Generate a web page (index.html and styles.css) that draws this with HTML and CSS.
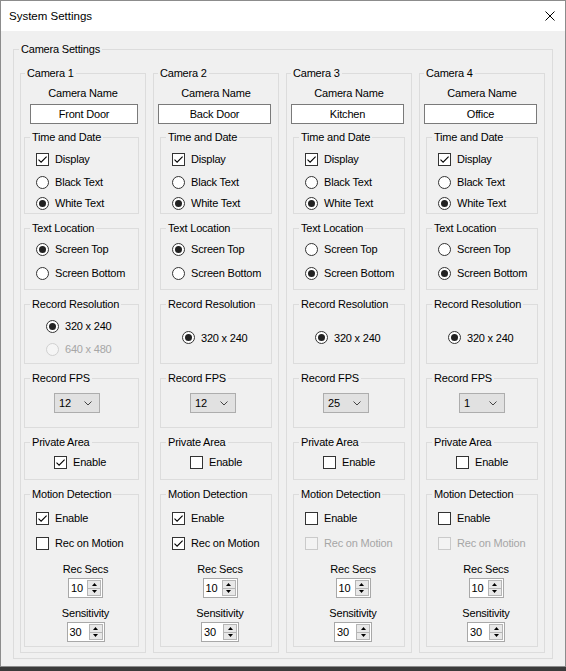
FILE: index.html
```html
<!DOCTYPE html>
<html>
<head>
<meta charset="utf-8">
<link rel="stylesheet" href="styles.css">
</head>
<body>
<div class="window">
  <div class="titlebar">
    <span class="title">System Settings</span>
    <svg class="close" width="10" height="10" viewBox="0 0 10 10"><path d="M0.5 0.5 L9.5 9.5 M9.5 0.5 L0.5 9.5" stroke="#000" stroke-width="1" fill="none"/></svg>
  </div>
  <div class="content">
    <fieldset class="settings">
      <legend>Camera Settings</legend>
      <div class="cams">

        <!-- Camera 1 -->
        <fieldset class="cam cam-first">
          <legend>Camera 1</legend>
          <div class="name-label">Camera Name</div>
          <div class="textbox">Front Door</div>
          <fieldset class="grp grp-time">
            <legend>Time and Date</legend>
            <div class="gb">
              <div class="row r-display"><span class="chk on"><svg viewBox="0 0 11 11"><path d="M1.5 5.6 L4.1 8.2 L9.6 2.6" stroke="#000" stroke-width="1.1" fill="none"/></svg></span>Display</div>
              <div class="row r-black"><span class="radio"></span>Black Text</div>
              <div class="row r-white"><span class="radio on"></span>White Text</div>
            </div>
          </fieldset>
          <fieldset class="grp grp-loc">
            <legend>Text Location</legend>
            <div class="gb">
              <div class="row r-top"><span class="radio on"></span>Screen Top</div>
              <div class="row r-bottom"><span class="radio"></span>Screen Bottom</div>
            </div>
          </fieldset>
          <fieldset class="grp grp-res">
            <legend>Record Resolution</legend>
            <div class="gb">
              <div class="row"><span class="radio on"></span>320 x 240</div>
              <div class="row disabled"><span class="radio"></span>640 x 480</div>
            </div>
          </fieldset>
          <fieldset class="grp grp-fps">
            <legend>Record FPS</legend>
            <div class="gb">
              <div class="combo"><span>12</span><svg width="8" height="5" viewBox="0 0 8 5"><path d="M0.5 0.5 L4 4 L7.5 0.5" stroke="#444" stroke-width="1" fill="none"/></svg></div>
            </div>
          </fieldset>
          <fieldset class="grp grp-priv">
            <legend>Private Area</legend>
            <div class="gb">
              <div class="row"><span class="chk on"><svg viewBox="0 0 11 11"><path d="M1.5 5.6 L4.1 8.2 L9.6 2.6" stroke="#000" stroke-width="1.1" fill="none"/></svg></span>Enable</div>
            </div>
          </fieldset>
          <fieldset class="grp grp-motion">
            <legend>Motion Detection</legend>
            <div class="gb">
              <div class="row r-enable"><span class="chk on"><svg viewBox="0 0 11 11"><path d="M1.5 5.6 L4.1 8.2 L9.6 2.6" stroke="#000" stroke-width="1.1" fill="none"/></svg></span>Enable</div>
              <div class="row r-rec"><span class="chk"></span>Rec on Motion</div>
            </div>
            <div class="center-col">
              <div class="lbl lbl-secs">Rec Secs</div>
              <div class="spin spin-secs"><span class="spin-val">10</span><span class="spin-btns"><span class="sb"><svg width="5" height="3" viewBox="0 0 5 3"><path d="M0 3 L2.5 0 L5 3 Z" fill="#000"/></svg></span><span class="sb"><svg width="5" height="3" viewBox="0 0 5 3"><path d="M0 0 L2.5 3 L5 0 Z" fill="#000"/></svg></span></span></div>
              <div class="lbl lbl-sens">Sensitivity</div>
              <div class="spin spin-sens"><span class="spin-val">30</span><span class="spin-btns"><span class="sb"><svg width="5" height="3" viewBox="0 0 5 3"><path d="M0 3 L2.5 0 L5 3 Z" fill="#000"/></svg></span><span class="sb"><svg width="5" height="3" viewBox="0 0 5 3"><path d="M0 0 L2.5 3 L5 0 Z" fill="#000"/></svg></span></span></div>
            </div>
          </fieldset>
        </fieldset>

        <!-- Camera 2 -->
        <fieldset class="cam">
          <legend>Camera 2</legend>
          <div class="name-label">Camera Name</div>
          <div class="textbox">Back Door</div>
          <fieldset class="grp grp-time">
            <legend>Time and Date</legend>
            <div class="gb">
              <div class="row r-display"><span class="chk on"><svg viewBox="0 0 11 11"><path d="M1.5 5.6 L4.1 8.2 L9.6 2.6" stroke="#000" stroke-width="1.1" fill="none"/></svg></span>Display</div>
              <div class="row r-black"><span class="radio"></span>Black Text</div>
              <div class="row r-white"><span class="radio on"></span>White Text</div>
            </div>
          </fieldset>
          <fieldset class="grp grp-loc">
            <legend>Text Location</legend>
            <div class="gb">
              <div class="row r-top"><span class="radio on"></span>Screen Top</div>
              <div class="row r-bottom"><span class="radio"></span>Screen Bottom</div>
            </div>
          </fieldset>
          <fieldset class="grp grp-res">
            <legend>Record Resolution</legend>
            <div class="gb">
              <div class="row"><span class="radio on"></span>320 x 240</div>
            </div>
          </fieldset>
          <fieldset class="grp grp-fps">
            <legend>Record FPS</legend>
            <div class="gb">
              <div class="combo"><span>12</span><svg width="8" height="5" viewBox="0 0 8 5"><path d="M0.5 0.5 L4 4 L7.5 0.5" stroke="#444" stroke-width="1" fill="none"/></svg></div>
            </div>
          </fieldset>
          <fieldset class="grp grp-priv">
            <legend>Private Area</legend>
            <div class="gb">
              <div class="row"><span class="chk"></span>Enable</div>
            </div>
          </fieldset>
          <fieldset class="grp grp-motion">
            <legend>Motion Detection</legend>
            <div class="gb">
              <div class="row r-enable"><span class="chk on"><svg viewBox="0 0 11 11"><path d="M1.5 5.6 L4.1 8.2 L9.6 2.6" stroke="#000" stroke-width="1.1" fill="none"/></svg></span>Enable</div>
              <div class="row r-rec"><span class="chk on"><svg viewBox="0 0 11 11"><path d="M1.5 5.6 L4.1 8.2 L9.6 2.6" stroke="#000" stroke-width="1.1" fill="none"/></svg></span>Rec on Motion</div>
            </div>
            <div class="center-col">
              <div class="lbl lbl-secs">Rec Secs</div>
              <div class="spin spin-secs"><span class="spin-val">10</span><span class="spin-btns"><span class="sb"><svg width="5" height="3" viewBox="0 0 5 3"><path d="M0 3 L2.5 0 L5 3 Z" fill="#000"/></svg></span><span class="sb"><svg width="5" height="3" viewBox="0 0 5 3"><path d="M0 0 L2.5 3 L5 0 Z" fill="#000"/></svg></span></span></div>
              <div class="lbl lbl-sens">Sensitivity</div>
              <div class="spin spin-sens"><span class="spin-val">30</span><span class="spin-btns"><span class="sb"><svg width="5" height="3" viewBox="0 0 5 3"><path d="M0 3 L2.5 0 L5 3 Z" fill="#000"/></svg></span><span class="sb"><svg width="5" height="3" viewBox="0 0 5 3"><path d="M0 0 L2.5 3 L5 0 Z" fill="#000"/></svg></span></span></div>
            </div>
          </fieldset>
        </fieldset>

        <!-- Camera 3 -->
        <fieldset class="cam">
          <legend>Camera 3</legend>
          <div class="name-label">Camera Name</div>
          <div class="textbox">Kitchen</div>
          <fieldset class="grp grp-time">
            <legend>Time and Date</legend>
            <div class="gb">
              <div class="row r-display"><span class="chk on"><svg viewBox="0 0 11 11"><path d="M1.5 5.6 L4.1 8.2 L9.6 2.6" stroke="#000" stroke-width="1.1" fill="none"/></svg></span>Display</div>
              <div class="row r-black"><span class="radio"></span>Black Text</div>
              <div class="row r-white"><span class="radio on"></span>White Text</div>
            </div>
          </fieldset>
          <fieldset class="grp grp-loc">
            <legend>Text Location</legend>
            <div class="gb">
              <div class="row r-top"><span class="radio"></span>Screen Top</div>
              <div class="row r-bottom"><span class="radio on"></span>Screen Bottom</div>
            </div>
          </fieldset>
          <fieldset class="grp grp-res">
            <legend>Record Resolution</legend>
            <div class="gb">
              <div class="row"><span class="radio on"></span>320 x 240</div>
            </div>
          </fieldset>
          <fieldset class="grp grp-fps">
            <legend>Record FPS</legend>
            <div class="gb">
              <div class="combo"><span>25</span><svg width="8" height="5" viewBox="0 0 8 5"><path d="M0.5 0.5 L4 4 L7.5 0.5" stroke="#444" stroke-width="1" fill="none"/></svg></div>
            </div>
          </fieldset>
          <fieldset class="grp grp-priv">
            <legend>Private Area</legend>
            <div class="gb">
              <div class="row"><span class="chk"></span>Enable</div>
            </div>
          </fieldset>
          <fieldset class="grp grp-motion">
            <legend>Motion Detection</legend>
            <div class="gb">
              <div class="row r-enable"><span class="chk"></span>Enable</div>
              <div class="row r-rec disabled"><span class="chk"></span>Rec on Motion</div>
            </div>
            <div class="center-col">
              <div class="lbl lbl-secs">Rec Secs</div>
              <div class="spin spin-secs"><span class="spin-val">10</span><span class="spin-btns"><span class="sb"><svg width="5" height="3" viewBox="0 0 5 3"><path d="M0 3 L2.5 0 L5 3 Z" fill="#000"/></svg></span><span class="sb"><svg width="5" height="3" viewBox="0 0 5 3"><path d="M0 0 L2.5 3 L5 0 Z" fill="#000"/></svg></span></span></div>
              <div class="lbl lbl-sens">Sensitivity</div>
              <div class="spin spin-sens"><span class="spin-val">30</span><span class="spin-btns"><span class="sb"><svg width="5" height="3" viewBox="0 0 5 3"><path d="M0 3 L2.5 0 L5 3 Z" fill="#000"/></svg></span><span class="sb"><svg width="5" height="3" viewBox="0 0 5 3"><path d="M0 0 L2.5 3 L5 0 Z" fill="#000"/></svg></span></span></div>
            </div>
          </fieldset>
        </fieldset>

        <!-- Camera 4 -->
        <fieldset class="cam">
          <legend>Camera 4</legend>
          <div class="name-label">Camera Name</div>
          <div class="textbox">Office</div>
          <fieldset class="grp grp-time">
            <legend>Time and Date</legend>
            <div class="gb">
              <div class="row r-display"><span class="chk on"><svg viewBox="0 0 11 11"><path d="M1.5 5.6 L4.1 8.2 L9.6 2.6" stroke="#000" stroke-width="1.1" fill="none"/></svg></span>Display</div>
              <div class="row r-black"><span class="radio"></span>Black Text</div>
              <div class="row r-white"><span class="radio on"></span>White Text</div>
            </div>
          </fieldset>
          <fieldset class="grp grp-loc">
            <legend>Text Location</legend>
            <div class="gb">
              <div class="row r-top"><span class="radio"></span>Screen Top</div>
              <div class="row r-bottom"><span class="radio on"></span>Screen Bottom</div>
            </div>
          </fieldset>
          <fieldset class="grp grp-res">
            <legend>Record Resolution</legend>
            <div class="gb">
              <div class="row"><span class="radio on"></span>320 x 240</div>
            </div>
          </fieldset>
          <fieldset class="grp grp-fps">
            <legend>Record FPS</legend>
            <div class="gb">
              <div class="combo combo-wide"><span>1</span><svg width="8" height="5" viewBox="0 0 8 5"><path d="M0.5 0.5 L4 4 L7.5 0.5" stroke="#444" stroke-width="1" fill="none"/></svg></div>
            </div>
          </fieldset>
          <fieldset class="grp grp-priv">
            <legend>Private Area</legend>
            <div class="gb">
              <div class="row"><span class="chk"></span>Enable</div>
            </div>
          </fieldset>
          <fieldset class="grp grp-motion">
            <legend>Motion Detection</legend>
            <div class="gb">
              <div class="row r-enable"><span class="chk"></span>Enable</div>
              <div class="row r-rec disabled"><span class="chk"></span>Rec on Motion</div>
            </div>
            <div class="center-col">
              <div class="lbl lbl-secs">Rec Secs</div>
              <div class="spin spin-secs"><span class="spin-val">10</span><span class="spin-btns"><span class="sb"><svg width="5" height="3" viewBox="0 0 5 3"><path d="M0 3 L2.5 0 L5 3 Z" fill="#000"/></svg></span><span class="sb"><svg width="5" height="3" viewBox="0 0 5 3"><path d="M0 0 L2.5 3 L5 0 Z" fill="#000"/></svg></span></span></div>
              <div class="lbl lbl-sens">Sensitivity</div>
              <div class="spin spin-sens"><span class="spin-val">30</span><span class="spin-btns"><span class="sb"><svg width="5" height="3" viewBox="0 0 5 3"><path d="M0 3 L2.5 0 L5 3 Z" fill="#000"/></svg></span><span class="sb"><svg width="5" height="3" viewBox="0 0 5 3"><path d="M0 0 L2.5 3 L5 0 Z" fill="#000"/></svg></span></span></div>
            </div>
          </fieldset>
        </fieldset>

      </div>
    </fieldset>
  </div>
</div>
</body>
</html>
```

FILE: styles.css
```css
* { box-sizing: border-box; }

html {
  background: #3a3a3a;
}

body {
  margin: 0;
  font-family: "Liberation Sans", Arial, sans-serif;
  font-size: 11px;
  letter-spacing: -0.2px;
  color: #000;
}

.window {
  width: 566px;
  height: 667px;
  border: 1px solid #8c8c8c;
  background: #f0f0f0;
  display: flex;
  flex-direction: column;
}

.titlebar {
  height: 30px;
  flex: none;
  background: #fff;
  display: flex;
  align-items: center;
  justify-content: space-between;
  padding: 0 10px 0 8px;
}

.title {
  font-size: 11.5px;
  letter-spacing: 0;
}

.close { display: block; }

.content {
  padding: 10px 12px 0 12px;
}

fieldset {
  border: 1px solid #dcdcdc;
  margin: 0;
  padding: 0;
  min-width: 0;
}

legend {
  margin-left: 5px;
  padding: 0 2px;
  height: 16px;
  line-height: 16px;
  white-space: nowrap;
}

.settings {
  padding: 8px 0 5px 0;
}

.cams {
  display: grid;
  grid-template-columns: repeat(4, 126px);
  column-gap: 7px;
  margin: 0 7px 0 6px;
}

.cam {
  padding: 0 0 5px 0;
}

.cam > legend { margin-left: 4px; }

.name-label {
  margin-top: 4px;
  height: 16px;
  line-height: 16px;
  text-align: center;
}

.textbox {
  margin: 3px 0 0 4px;
  width: 113px;
  height: 20px;
  border: 1px solid #7a7a7a;
  background: #fff;
  text-align: center;
  line-height: 18px;
}

.cam-first .textbox {
  margin-left: 9px;
  width: 108px;
}

.grp {
  margin: 6px 0 0 6px;
  width: 112px;
}

.cam-first .grp {
  margin-left: 3px;
  width: 115px;
}

.textbox + .grp { margin-top: 5px; }

.gb { padding-left: 11px; }

.row {
  display: flex;
  align-items: center;
  height: 20px;
  white-space: nowrap;
}

.chk {
  flex: none;
  width: 13px;
  height: 13px;
  border: 1px solid #333;
  background: #fff;
  margin-right: 6px;
}

.chk svg {
  display: block;
  width: 11px;
  height: 11px;
}

.radio {
  flex: none;
  width: 13px;
  height: 13px;
  border: 1px solid #333;
  border-radius: 50%;
  background: #fff;
  margin-right: 6px;
  display: flex;
  align-items: center;
  justify-content: center;
}

.radio.on::after {
  content: "";
  width: 7px;
  height: 7px;
  border-radius: 50%;
  background: #222;
}

.disabled { color: #a6a6a6; }
.disabled .chk { border-color: #cacaca; background: #f3f3f3; }
.disabled .radio { border-color: #d0d0d0; background: #f5f5f5; }

/* Time and Date */
.r-display { margin-top: 4px; }
.r-black { margin-top: 3px; }
.r-white { margin-top: 1px; }

/* Text Location */
.grp-loc .gb { padding-bottom: 6px; }
.r-top { margin-top: 3px; }
.r-bottom { margin-top: 4px; }

/* Record Resolution */
.grp-res .gb {
  padding-left: 21px;
  height: 51px;
  display: flex;
  flex-direction: column;
  justify-content: center;
  gap: 3px;
}

/* Record FPS */
.grp-fps .gb {
  padding: 7px 0 14px 29px;
}

.combo {
  width: 46px;
  height: 20px;
  background: #e1e1e1;
  border: 1px solid #adadad;
  display: flex;
  align-items: center;
  justify-content: space-between;
  padding: 0 7px 0 4px;
}

.combo-wide { margin-left: 3px; }

.combo svg { display: block; }

/* Private Area */
.grp-priv .gb {
  padding: 2px 0 7px 29px;
}

/* Motion Detection */
.grp-motion { padding-bottom: 4px; }
.r-enable { margin-top: 6px; }
.r-rec { margin-top: 5px; }

.center-col {
  display: flex;
  flex-direction: column;
  align-items: center;
  padding-left: 8px;
}

.lbl {
  height: 16px;
  line-height: 16px;
}

.lbl-secs { margin-top: 8px; }
.lbl-sens { margin-top: 7px; }

.spin {
  margin-top: 1px;
  height: 20px;
  border: 1px solid #a8a8a8;
  background: #fff;
  display: flex;
  align-items: stretch;
}

.spin-secs { width: 35px; }
.spin-sens { width: 38px; }

.spin-val {
  flex: 1;
  padding-left: 2px;
  line-height: 18px;
}

.spin-btns {
  width: 15px;
  flex: none;
  display: flex;
  flex-direction: column;
  padding: 1px 1px 1px 0;
}

.sb {
  flex: 1;
  background: #e8e8e8;
  border: 1px solid #b5b5b5;
  display: flex;
  align-items: center;
  justify-content: center;
}

.sb + .sb { border-top: none; }

.sb svg { display: block; }
```
